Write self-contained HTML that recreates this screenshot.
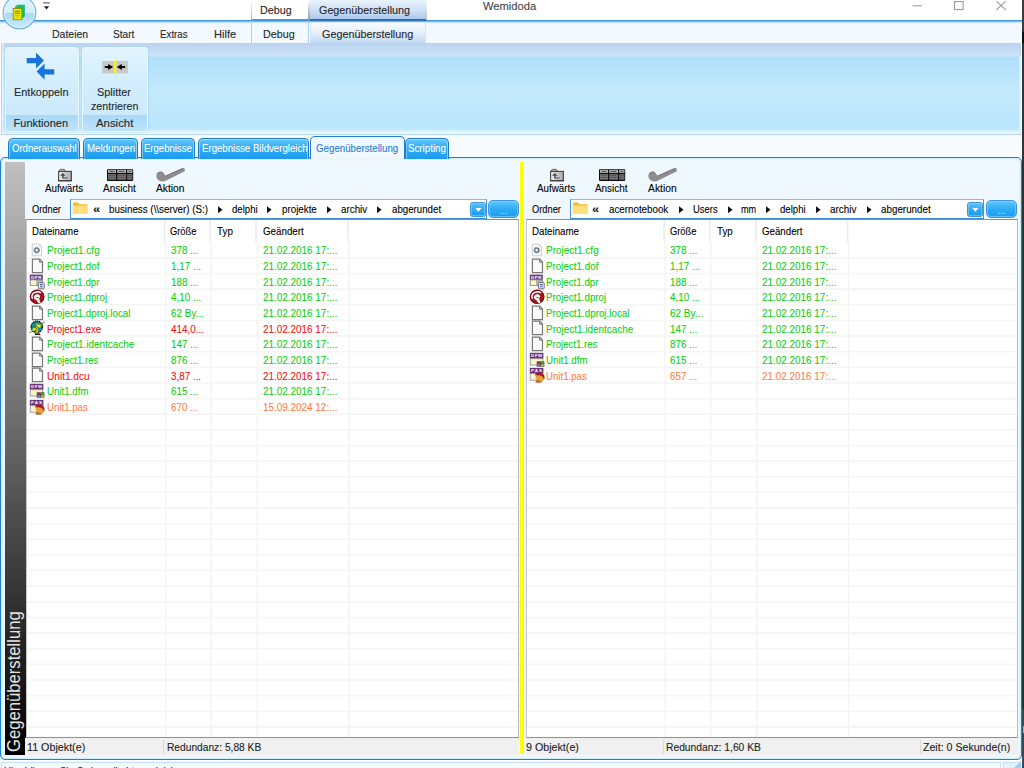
<!DOCTYPE html><html lang="de"><head><meta charset="utf-8"><title>Wemidoda</title><style>
*{margin:0;padding:0;box-sizing:border-box}
html,body{width:1024px;height:768px;overflow:hidden;background:#fff}
body{position:relative;font-family:"Liberation Sans",sans-serif;color:#333}
.a{position:absolute}
.t{position:absolute;white-space:nowrap;line-height:1;transform-origin:0 0;-webkit-text-stroke:.1px currentColor}
.g{color:#12cf12}.r{color:#f61212}.o{color:#ff8048}
.tab{position:absolute;top:138px;height:20.600px;border:1px solid #1f78c8;border-bottom:none;border-radius:5px 5px 0 0;background:linear-gradient(#62c6fb,#30adf5 45%,#1a9bf0);box-shadow:inset 0 1px 0 #a4dcfc,inset 1px 0 0 rgba(255,255,255,.35),inset -1px 0 0 rgba(255,255,255,.45)}
.hl{position:absolute;height:1px;background:#f0f0f0}
.vl{position:absolute;width:1px;background:#f0f0f0}
</style></head><body>
<div class="a" style="left:0;top:0;width:1022px;height:20px;background:#fff"></div>
<div class="a" style="left:0;top:20px;width:1022px;height:23px;background:linear-gradient(#3b8fdc 0,#4a9ce2 1px,#a9d6f5 2px,#e2f2fd 3px,#f3f9fe 4px,#f3f9fe 100%)"></div>
<div class="a" style="left:251px;top:0;width:1px;height:20px;background:linear-gradient(#fff,#aaa)"></div>
<div class="a" style="left:252px;top:0;width:56px;height:20px;background:#fff;border-bottom:1px solid #8a8a8a"></div>
<div class="a" style="left:308px;top:0;width:2px;height:20px;background:linear-gradient(#fff,#999)"></div>
<div class="a" style="left:310px;top:0;width:116px;height:21px;background:linear-gradient(#eaf3fc,#c3daf3 70%,#a9c8ec);border-bottom:2px solid #2f6fb5"></div>
<div class="a" style="left:426px;top:0;width:1px;height:20px;background:linear-gradient(#fff,#bbb)"></div>
<div class="t" style="left:260.20px;top:5px;font-size:11px;color:#262626;transform:scaleX(0.975);">Debug</div>
<div class="t" style="left:319.35px;top:5px;font-size:11px;color:#262626;transform:scaleX(0.979);">Gegenüberstellung</div>
<div class="t" style="left:482.60px;top:1px;font-size:11px;color:#444;transform:scaleX(1.015);">Wemidoda</div>
<div class="a" style="left:251px;top:21px;width:1px;height:22px;background:#a9d0f2"></div>
<div class="a" style="left:308px;top:21px;width:1px;height:22px;background:#a9d0f2"></div>
<div class="a" style="left:311px;top:23px;width:114px;height:21px;border-radius:4px 4px 0 0;background:linear-gradient(#fafcff,#e4eefa 50%,#bcd6f1);box-shadow:0 0 0 1px #d5e6f7"></div>
<div class="t" style="left:51.60px;top:29px;font-size:11px;color:#262626;transform:scaleX(0.955);">Dateien</div>
<div class="t" style="left:113.35px;top:29px;font-size:11px;color:#262626;transform:scaleX(0.923);">Start</div>
<div class="t" style="left:160.10px;top:29px;font-size:11px;color:#262626;transform:scaleX(0.888);">Extras</div>
<div class="t" style="left:213.60px;top:29px;font-size:11px;color:#262626;transform:scaleX(1.008);">Hilfe</div>
<div class="t" style="left:263.10px;top:29px;font-size:11px;color:#262626;transform:scaleX(0.978);">Debug</div>
<div class="t" style="left:322.10px;top:29px;font-size:11px;color:#262626;transform:scaleX(0.981);">Gegenüberstellung</div>
<svg class="a" style="left:900px;top:0" width="122" height="20" viewBox="0 0 122 20"><path d="M12.5 5.8h9.5" stroke="#a8a8a8" stroke-width="1.2"/><rect x="54.5" y="1.6" width="8.6" height="8" fill="none" stroke="#999" stroke-width="1.1"/><path d="M96.3 1.2l9.6 8.8M105.9 1.2l-9.6 8.8" stroke="#a0a0a0" stroke-width="1.1"/></svg>
<svg class="a" style="left:42px;top:1px" width="10" height="10" viewBox="0 0 10 10"><rect x="1.2" y="1.4" width="6.6" height="1" fill="#444"/><path d="M1.8 5.3h5.4L4.5 8.4z" fill="#222"/></svg>
<svg class="a" style="left:0;top:0" width="40" height="32" viewBox="0 0 40 32">
<defs><linearGradient id="ab" x1="0" y1="0" x2="0" y2="1"><stop offset="0" stop-color="#e4f4fd"/><stop offset=".515" stop-color="#d4edfc"/><stop offset=".525" stop-color="#a6daf7"/><stop offset="1" stop-color="#cdebfc"/></linearGradient></defs>
<ellipse cx="19.5" cy="12.4" rx="16.3" ry="16.3" fill="url(#ab)" stroke="#76b5e8" stroke-width="1.300"/>
<ellipse cx="19.5" cy="12.4" rx="15.2" ry="15.2" fill="none" stroke="#e9f6fe" stroke-width="1" opacity=".8"/>
<path d="M16.5 4.800h8.400v11.400l-1.600 1.400h-6.800z" fill="#18b5b0"/>
<path d="M15 6.300h8.400v11l-1.600 1.400H15z" fill="#16c040"/>
<rect x="13.200" y="8.500" width="8.600" height="11.300" fill="#f2f000" stroke="#8a8600" stroke-width=".8"/>
<path d="M14.800 11.200h5.400M14.800 13.200h5.400" stroke="#6a6600" stroke-width=".9"/>
<path d="M14.800 15.400h5.400M14.800 17.200h5.400" stroke="#b8b400" stroke-width=".8"/>
</svg>
<div class="a" style="left:1px;top:43px;width:1020px;height:92px;border:1px solid #b4d6f3;border-top:none;background:linear-gradient(#b9d4f0 0,#cbe1f6 12px,#d2e7f8 13px,#aedffa 14px,#c4e9fc 50px,#b9e4fb 84px,#c9ebfc 87px,#eef8fe 90px,#eef8fe 92px)"></div>
<div class="a" style="left:2px;top:43px;width:3px;height:91px;background:linear-gradient(90deg,#eaf5fd,rgba(234,245,253,0))"></div>
<div class="a" style="left:1018.600px;top:56px;width:2px;height:77px;background:rgba(226,243,253,.75)"></div>
<div class="a" style="left:4.5px;top:47px;width:74px;height:85px;border:1px solid #eaf6fe;border-radius:3px;background:linear-gradient(#e2f4fe,#d3eefd 40%,#cbeafc 67px,#a8d8f8 67px,#bfe4fa 83px);box-shadow:0 0 0 1px rgba(150,200,240,.3)"></div>
<div class="a" style="left:82px;top:47px;width:66px;height:85px;border:1px solid #eaf6fe;border-radius:3px;background:linear-gradient(#e2f4fe,#d3eefd 40%,#cbeafc 67px,#a8d8f8 67px,#bfe4fa 83px);box-shadow:0 0 0 1px rgba(150,200,240,.3)"></div>
<svg class="a" style="left:24px;top:50px" width="34" height="32" viewBox="24 50 34 32"><g fill="#1874dc"><path d="M26.700 58.100h9.400v-5.400l7.900 7.900-7.900 8.100v-5.500h-9.400z"/><path d="M54.200 69.200h-9.600v-5.800l-8 8.200 8 8.100v-5.300h9.600z"/></g><path d="M46.400 59.700L35.800 70.300" stroke="#d9f0fd" stroke-width="1.700"/></svg>
<svg class="a" style="left:101px;top:59px" width="28" height="16" viewBox="101 59 28 16"><rect x="102.100" y="61" width="25.800" height="12.400" fill="#c8c8c8"/><rect x="113.900" y="60.400" width="2.300" height="13.400" fill="#fbfb00"/><path d="M104.800 66.100h3.400V64l5 3.050-5 3.050V68h-3.400zM125.100 66.100h-3.300V64l-5 3.050 5 3.050V68h3.300z" fill="#000"/></svg>
<div class="t" style="left:13.60px;top:87px;font-size:11px;color:#262626;transform:scaleX(0.992);">Entkoppeln</div>
<div class="t" style="left:97.30px;top:87px;font-size:11px;color:#262626;transform:scaleX(0.993);">Splitter</div>
<div class="t" style="left:90.60px;top:101px;font-size:11px;color:#262626;transform:scaleX(0.971);">zentrieren</div>
<div class="t" style="left:13.60px;top:118px;font-size:11px;color:#262626;">Funktionen</div>
<div class="t" style="left:96.10px;top:118px;font-size:11px;color:#262626;transform:scaleX(1.034);">Ansicht</div>
<div class="a" style="left:0;top:135px;width:1022px;height:24px;background:#f6fbff"></div>
<div class="a" style="left:0;top:157px;width:1022px;height:603px;border:1.500px solid #1f7ed6;border-radius:5px;background:#eff8fe;box-shadow:inset 0 0 2px 1px #c6ebfd"></div>
<div class="tab" style="left:7.5px;width:72.5px"></div>
<div class="t" style="left:12.10px;top:143px;font-size:10.8px;color:#fff;transform:scaleX(0.884);">Ordnerauswahl</div>
<div class="tab" style="left:82.5px;width:55.0px"></div>
<div class="t" style="left:86.60px;top:143px;font-size:10.8px;color:#fff;transform:scaleX(0.902);">Meldungen</div>
<div class="tab" style="left:140.6px;width:54.4px"></div>
<div class="t" style="left:144.35px;top:143px;font-size:10.8px;color:#fff;transform:scaleX(0.883);">Ergebnisse</div>
<div class="tab" style="left:197.8px;width:111.7px"></div>
<div class="t" style="left:201.60px;top:143px;font-size:10.8px;color:#fff;transform:scaleX(0.893);">Ergebnisse Bildvergleich</div>
<div class="tab" style="left:405.4px;width:43.6px"></div>
<div class="t" style="left:407.60px;top:143px;font-size:10.8px;color:#fff;transform:scaleX(0.902);">Scripting</div>
<div class="a" style="left:309.7px;top:136px;width:95.3px;height:23px;border:1.300px solid #1f7ed6;border-bottom:none;border-radius:5px 5px 0 0;background:#eff8fe"></div>
<div class="t" style="left:316.40px;top:143px;font-size:10.8px;color:#2b7fd3;transform:scaleX(0.901);">Gegenüberstellung</div>
<div class="a" style="left:520px;top:162px;width:4.300px;height:592px;background:#ffff00"></div>
<svg class="a" style="left:50.0px;top:164px" width="140" height="22" viewBox="50 164 140 22"><defs><linearGradient id="fg25" x1="0" y1="0" x2="1" y2="0"><stop offset="0" stop-color="#f0f0f0"/><stop offset="1" stop-color="#a8a8a8"/></linearGradient></defs><path d="M59 171.200l1.300-1.800h4l1.300 1.800z" fill="#e4e4e4" stroke="#555" stroke-width=".9"/><rect x="58.600" y="171.400" width="12.800" height="9.300" fill="url(#fg25)" stroke="#444" stroke-width="1.100"/><path d="M58.400 180.800h13.200" stroke="#333" stroke-width="1"/><path d="M62.800 172.900l2.800 2.900h-2v1.600h4v1.200h-5.400v-2.800h-2.200z" fill="#4a4a4a"/><rect x="107" y="169.300" width="26.200" height="11.600" rx=".8" fill="#0c0c0c"/><rect x="108" y="170.200" width="8" height="2.600" fill="#cfcfcf"/><rect x="117.200" y="170.200" width="8.800" height="2.600" fill="#cfcfcf"/><rect x="127.200" y="170.200" width="5.200" height="2.600" fill="#cfcfcf"/><path d="M109.400 171.500h5.400M118.600 171.500h6M128.400 171.500h3" stroke="#333" stroke-width=".8"/><rect x="108" y="174.100" width="8" height="5.600" fill="#747474"/><rect x="117.200" y="174.100" width="8.800" height="5.600" fill="#747474"/><rect x="127.200" y="174.100" width="5.200" height="5.600" fill="#747474"/><path d="M109 175.600h6M118.200 175.600h7M128 175.600h3.600M109 177.600h6M118.200 177.600h7M128 177.600h3.600" stroke="#3c3c3c" stroke-width=".8" stroke-dasharray="1.400 .8"/><path d="M156.400 175.800c0-3 3.400-4.800 6.400-3.400 1.300.6 2 2 2.600 3.400l17-7.600c1.600-.6 2.600.4 2.400 1.800v1.200l-19.600 9.800c-4 1.400-8.800-.4-8.800-5.200z" fill="#8d8d8d"/><path d="M165.600 176.100l17-7.600M157 174.200c.8-2 3.400-3 5.600-1.800" stroke="#686868" stroke-width=".8" fill="none"/></svg>
<div class="t" style="left:44.60px;top:183px;font-size:10.8px;color:#000;transform:scaleX(0.909);">Aufwärts</div>
<div class="t" style="left:103.35px;top:183px;font-size:10.8px;color:#000;transform:scaleX(0.924);">Ansicht</div>
<div class="t" style="left:155.85px;top:183px;font-size:10.8px;color:#000;transform:scaleX(0.948);">Aktion</div>
<div class="t" style="left:32.30px;top:204px;font-size:10.8px;color:#000;transform:scaleX(0.860);">Ordner</div>
<div class="a" style="left:69.9px;top:199px;width:417.3px;height:20px;border:1.300px solid #4a92da;border-top-color:#86bdeb;border-bottom-color:#3b8ad2;background:#fff"></div>
<svg class="a" style="left:72.10000000000001px;top:202px" width="16" height="13" viewBox="0 0 16 13"><path d="M.8 1.600c0-.6.400-1 1-1h4.200l1.400 1.600h7c.6 0 1 .4 1 1V11c0 .6-.4 1-1 1H1.800c-.6 0-1-.4-1-1z" fill="#f5b82e"/><path d="M.8 3.600h14.600V11c0 .6-.4 1-1 1H1.800c-.6 0-1-.4-1-1z" fill="#ffdf7e"/></svg>
<div class="t" style="left:92.50px;top:204px;font-size:11px;color:#222;font-weight:700;transform:scaleX(1.176);">«</div>
<div class="t" style="left:108.70px;top:204px;font-size:10.8px;color:#000;transform:scaleX(0.907);">business (\\server) (S:)</div>
<svg class="a" style="left:218px;top:206px" width="5" height="8" viewBox="0 0 5 8"><path d="M0 .3l4.600 3.500L0 7.300z" fill="#111"/></svg>
<div class="t" style="left:232.10px;top:204px;font-size:10.8px;color:#000;transform:scaleX(0.891);">delphi</div>
<svg class="a" style="left:267.3px;top:206px" width="5" height="8" viewBox="0 0 5 8"><path d="M0 .3l4.600 3.500L0 7.300z" fill="#111"/></svg>
<div class="t" style="left:281.50px;top:204px;font-size:10.8px;color:#000;transform:scaleX(0.906);">projekte</div>
<svg class="a" style="left:326.5px;top:206px" width="5" height="8" viewBox="0 0 5 8"><path d="M0 .3l4.600 3.500L0 7.300z" fill="#111"/></svg>
<div class="t" style="left:340.60px;top:204px;font-size:10.8px;color:#000;transform:scaleX(0.909);">archiv</div>
<svg class="a" style="left:377px;top:206px" width="5" height="8" viewBox="0 0 5 8"><path d="M0 .3l4.600 3.500L0 7.300z" fill="#111"/></svg>
<div class="t" style="left:391.50px;top:204px;font-size:10.8px;color:#000;transform:scaleX(0.899);">abgerundet</div>
<div class="a" style="left:470.2px;top:201.500px;width:15.400px;height:15.500px;border:1px solid #3f93dc;border-radius:2.500px;background:linear-gradient(#5cc2fa,#2eacf5 50%,#1a9bf0);box-shadow:inset 0 0 0 1px rgba(150,210,250,.55)"></div>
<svg class="a" style="left:473.59999999999997px;top:207px" width="9" height="6" viewBox="0 0 9 6"><path d="M1.300 1h6.200L4.400 4.800z" fill="#fff"/></svg>
<div class="a" style="left:488.4px;top:200.200px;width:30.3px;height:17.800px;border:1px solid #3f93dc;border-radius:5px;background:linear-gradient(#62c8fb,#2eacf5 50%,#1a9bf0);box-shadow:inset 0 0 0 1px rgba(150,210,250,.6)"></div>
<div class="t" style="left:499.55px;top:206px;font-size:10px;color:#bfe4fb;">...</div>
<div class="a" style="left:26.0px;top:219px;width:493.3px;height:519px;background:#fff;border:1px solid #9a9a9a;border-color:#8e8e8e #b6bac2 #90909a #c4c4c4;border-right-width:1.500px"></div>
<svg class="a" style="left:27.0px;top:220px" width="490.8" height="517" viewBox="27.0 220 490.8 517"><path d="M27.0 257.90h490.8M27.0 273.53h490.8M27.0 289.17h490.8M27.0 304.80h490.8M27.0 320.43h490.8M27.0 336.06h490.8M27.0 351.70h490.8M27.0 367.33h490.8M27.0 382.96h490.8M27.0 398.60h490.8M27.0 414.23h490.8M27.0 429.86h490.8M27.0 445.50h490.8M27.0 461.13h490.8M27.0 476.76h490.8M27.0 492.39h490.8M27.0 508.03h490.8M27.0 523.66h490.8M27.0 539.29h490.8M27.0 554.93h490.8M27.0 570.56h490.8M27.0 586.19h490.8M27.0 601.83h490.8M27.0 617.46h490.8M27.0 633.09h490.8M27.0 648.73h490.8M27.0 664.36h490.8M27.0 679.99h490.8M27.0 695.62h490.8M27.0 711.26h490.8M27.0 726.89h490.8M165.7 242.300V737M211.2 242.300V737M257.5 242.300V737M349 242.300V737" stroke="#f5f5f5" stroke-width="1.600" fill="none"/><path d="M164.5 220V242.300M210 220V242.300M256 220V242.300M348.1 220V242.300" stroke="#e9e9e9" stroke-width="1.400" fill="none"/></svg>
<div class="t" style="left:32.35px;top:226px;font-size:10.8px;color:#000;transform:scaleX(0.890);">Dateiname</div>
<div class="t" style="left:170.35px;top:226px;font-size:10.8px;color:#000;transform:scaleX(0.864);">Größe</div>
<div class="t" style="left:216.85px;top:226px;font-size:10.8px;color:#000;transform:scaleX(0.911);">Typ</div>
<div class="t" style="left:262.50px;top:226px;font-size:10.8px;color:#000;transform:scaleX(0.904);">Geändert</div>
<svg class="a" style="left:25.4px;top:242.27px" width="21" height="16" viewBox="0 0 21 16"><path d="M7.200 2h7l2.400 2.400v9.400H7.200z" fill="#f7f9fb" stroke="#c6c9cc" stroke-width=".9"/><path d="M14.200 2v2.400h2.400" fill="none" stroke="#d0d3d6" stroke-width=".7"/><circle cx="11.700" cy="8.200" r="2" fill="none" stroke="#5f7482" stroke-width="1.300"/><circle cx="11.700" cy="8.200" r="2.800" fill="none" stroke="#5f7482" stroke-width="1" stroke-dasharray="1.100 1.100"/></svg>
<div class="t g" style="left:46.85px;top:245px;font-size:10.8px;transform:scaleX(0.924);">Project1.cfg</div>
<div class="t g" style="left:170.60px;top:245px;font-size:10.8px;transform:scaleX(0.910);">378 ...</div>
<div class="t g" style="left:262.50px;top:245px;font-size:10.8px;transform:scaleX(0.918);">21.02.2016 17:...</div>
<svg class="a" style="left:25.4px;top:257.9px" width="21" height="16" viewBox="0 0 21 16"><path d="M7.400 1.200h7.400l2.700 2.800v10.600H7.400z" fill="#fafafa" stroke="#787878" stroke-width="1.200"/><path d="M14.600 1.400v2.800h2.800" fill="none" stroke="#787878" stroke-width="1"/></svg>
<div class="t g" style="left:46.85px;top:261px;font-size:10.8px;transform:scaleX(0.910);">Project1.dof</div>
<div class="t g" style="left:170.60px;top:261px;font-size:10.8px;transform:scaleX(0.912);">1,17 ...</div>
<div class="t g" style="left:262.50px;top:261px;font-size:10.8px;transform:scaleX(0.918);">21.02.2016 17:...</div>
<svg class="a" style="left:25.4px;top:273.54px" width="21" height="16" viewBox="0 0 21 16"><rect x="4.800" y=".6" width="13" height="5.300" fill="#6b3679"/><rect x="5.200" y="5.900" width="12.200" height="5.600" fill="#b4b4b4" stroke="#8a8a8a" stroke-width=".8"/><rect x="6" y="6.400" width="5" height="4.600" fill="#f8f6c4"/><text x="6" y="4.700" font-family="Liberation Sans,sans-serif" font-size="4.400" font-weight="bold" fill="#fff" textLength="10.400" lengthAdjust="spacing">DPR</text><rect x="13.400" y="8.600" width="5.800" height="6.200" rx=".8" fill="#f4f2c8" stroke="#6c6c6c" stroke-width="1"/><path d="M15 10.600h2.600M15 12.800h2.600" stroke="#3a55c8" stroke-width="1.100"/></svg>
<div class="t g" style="left:46.85px;top:277px;font-size:10.8px;transform:scaleX(0.901);">Project1.dpr</div>
<div class="t g" style="left:170.60px;top:277px;font-size:10.8px;transform:scaleX(0.910);">188 ...</div>
<div class="t g" style="left:262.50px;top:277px;font-size:10.8px;transform:scaleX(0.918);">21.02.2016 17:...</div>
<svg class="a" style="left:25.4px;top:289.17px" width="21" height="16" viewBox="0 0 21 16"><ellipse cx="12.100" cy="7.800" rx="7.400" ry="7.300" fill="#a31420"/><ellipse cx="12.100" cy="7.800" rx="6.700" ry="6.600" fill="none" stroke="#800c16" stroke-width="1"/><path d="M7.500 9.800C6.300 7 7.500 4.400 10 3.300c2-.9 4.400-.6 6 .5" stroke="#fff" stroke-width="1.400" fill="none"/><path d="M9.200 6.900c1-1.200 2.400-1.700 3.600-1.600 1.200.1 2 .9 2.300 2-.1 1-.5 1.800-1 2.500l1.400 4-1.800.6-2.400-3.400c-.9-.2-1.600-.7-2-1.300-.5-.9-.5-1.900-.1-2.800z" fill="#fff"/><path d="M11.400 8.300l2.400.4" stroke="#a31420" stroke-width=".9"/></svg>
<div class="t g" style="left:46.85px;top:292px;font-size:10.8px;transform:scaleX(0.903);">Project1.dproj</div>
<div class="t g" style="left:170.60px;top:292px;font-size:10.8px;transform:scaleX(0.912);">4,10 ...</div>
<div class="t g" style="left:262.50px;top:292px;font-size:10.8px;transform:scaleX(0.918);">21.02.2016 17:...</div>
<svg class="a" style="left:25.4px;top:304.8px" width="21" height="16" viewBox="0 0 21 16"><path d="M7.400 1.200h7.400l2.700 2.800v10.600H7.400z" fill="#fafafa" stroke="#787878" stroke-width="1.200"/><path d="M14.600 1.400v2.800h2.800" fill="none" stroke="#787878" stroke-width="1"/></svg>
<div class="t g" style="left:46.85px;top:308px;font-size:10.8px;transform:scaleX(0.909);">Project1.dproj.local</div>
<div class="t g" style="left:170.60px;top:308px;font-size:10.8px;transform:scaleX(0.919);">62 By...</div>
<div class="t g" style="left:262.50px;top:308px;font-size:10.8px;transform:scaleX(0.918);">21.02.2016 17:...</div>
<svg class="a" style="left:25.4px;top:320.44px" width="21" height="16" viewBox="0 0 21 16"><circle cx="11.800" cy="6.900" r="5.700" fill="#0f8a8e" stroke="#071a1c" stroke-width="1.300" stroke-dasharray="1.500 .5"/><path d="M7 5c3-1.200 6.600-1.200 9.600 0M6.600 9c3 1.300 7.400 1.300 10.400 0" stroke="#2ab3b0" stroke-width=".7" fill="none"/><rect x="10.800" y="3.200" width="1.900" height="10.400" fill="#aaa212"/><rect x="12.300" y="3.600" width=".6" height="9.600" fill="#d8dcc0"/><rect x="9.900" y="3.100" width="1.200" height="1.100" fill="#b82010"/><rect x="9.800" y="13.500" width="5.400" height="1.500" rx=".5" fill="#0a0a0a"/><rect x="12.600" y="13.600" width="1.400" height="1.300" fill="#c81414"/><path d="M4.600 12.900L19.600 1.700" stroke="#2a2a10" stroke-width="1.100" stroke-opacity=".7"/><path d="M4.600 12.800L19.200 1.900" stroke="#f4f000" stroke-width=".7"/><circle cx="9.100" cy="9.300" r="1.400" fill="#f4f400"/><circle cx="14.300" cy="5.900" r="1.500" fill="#f4f400"/></svg>
<div class="t r" style="left:46.85px;top:324px;font-size:10.8px;transform:scaleX(0.904);">Project1.exe</div>
<div class="t r" style="left:170.60px;top:324px;font-size:10.8px;transform:scaleX(0.913);">414,0...</div>
<div class="t r" style="left:262.50px;top:324px;font-size:10.8px;transform:scaleX(0.918);">21.02.2016 17:...</div>
<svg class="a" style="left:25.4px;top:336.07px" width="21" height="16" viewBox="0 0 21 16"><path d="M7.400 1.200h7.400l2.700 2.800v10.600H7.400z" fill="#fafafa" stroke="#787878" stroke-width="1.200"/><path d="M14.600 1.400v2.800h2.800" fill="none" stroke="#787878" stroke-width="1"/></svg>
<div class="t g" style="left:46.85px;top:339px;font-size:10.8px;transform:scaleX(0.920);">Project1.identcache</div>
<div class="t g" style="left:170.60px;top:339px;font-size:10.8px;transform:scaleX(0.910);">147 ...</div>
<div class="t g" style="left:262.50px;top:339px;font-size:10.8px;transform:scaleX(0.918);">21.02.2016 17:...</div>
<svg class="a" style="left:25.4px;top:351.7px" width="21" height="16" viewBox="0 0 21 16"><path d="M7.400 1.200h7.400l2.700 2.800v10.600H7.400z" fill="#fafafa" stroke="#787878" stroke-width="1.200"/><path d="M14.600 1.400v2.800h2.800" fill="none" stroke="#787878" stroke-width="1"/></svg>
<div class="t g" style="left:46.85px;top:355px;font-size:10.8px;transform:scaleX(0.893);">Project1.res</div>
<div class="t g" style="left:170.60px;top:355px;font-size:10.8px;transform:scaleX(0.910);">876 ...</div>
<div class="t g" style="left:262.50px;top:355px;font-size:10.8px;transform:scaleX(0.918);">21.02.2016 17:...</div>
<svg class="a" style="left:25.4px;top:367.33px" width="21" height="16" viewBox="0 0 21 16"><path d="M7.400 1.200h7.400l2.700 2.800v10.600H7.400z" fill="#fafafa" stroke="#787878" stroke-width="1.200"/><path d="M14.600 1.400v2.800h2.800" fill="none" stroke="#787878" stroke-width="1"/></svg>
<div class="t r" style="left:46.85px;top:371px;font-size:10.8px;transform:scaleX(0.935);">Unit1.dcu</div>
<div class="t r" style="left:170.60px;top:371px;font-size:10.8px;transform:scaleX(0.912);">3,87 ...</div>
<div class="t r" style="left:262.50px;top:371px;font-size:10.8px;transform:scaleX(0.918);">21.02.2016 17:...</div>
<svg class="a" style="left:25.4px;top:382.97px" width="21" height="16" viewBox="0 0 21 16"><rect x="4.800" y=".8" width="13.600" height="5.900" fill="#6b3679"/><rect x="5.200" y="6.700" width="12.600" height="6.300" fill="#f8f6c4" stroke="#8a8a8a" stroke-width=".8"/><text x="6" y="5.400" font-family="Liberation Sans,sans-serif" font-size="4.400" font-weight="bold" fill="#fff" textLength="11" lengthAdjust="spacing">DFM</text><rect x="11.700" y="9.200" width="7.700" height="5.600" rx=".6" fill="#555"/><rect x="12.500" y="9.800" width="2.600" height="1.900" rx=".8" fill="#e01828"/><rect x="16.100" y="9.800" width="2.600" height="1.900" rx=".8" fill="#2cb62c"/><rect x="12.500" y="12.300" width="2.600" height="1.900" rx=".8" fill="#5f8df0"/><rect x="16.100" y="12.300" width="2.600" height="1.900" rx=".8" fill="#f2c428"/></svg>
<div class="t g" style="left:46.85px;top:386px;font-size:10.8px;transform:scaleX(0.899);">Unit1.dfm</div>
<div class="t g" style="left:170.60px;top:386px;font-size:10.8px;transform:scaleX(0.910);">615 ...</div>
<div class="t g" style="left:262.50px;top:386px;font-size:10.8px;transform:scaleX(0.918);">21.02.2016 17:...</div>
<svg class="a" style="left:25.4px;top:398.6px" width="21" height="16" viewBox="0 0 21 16"><rect x="4.800" y=".9" width="13.600" height="5.700" fill="#6b3679"/><rect x="5.200" y="6.600" width="9" height="6.600" fill="#f8f6c4" stroke="#8a8a8a" stroke-width=".8"/><text x="6" y="5.400" font-family="Liberation Sans,sans-serif" font-size="4.400" font-weight="bold" fill="#fff" textLength="11" lengthAdjust="spacing">PAS</text><ellipse cx="14.900" cy="10.900" rx="4.300" ry="3.900" fill="#e2a23c"/><path d="M9.800 8.600c.8-3.400 6.600-4.200 9 -.8.900 1.300.9 3.400.4 5-.5-2.400-1.900-4-4.400-4.400-1.900-.3-3.600-.2-5 .2z" fill="#b01818"/><path d="M11.400 10.600c.6 1.600.2 3-.9 4.200 1.800.5 4.400.5 6.400-.3-1.800-.2-3-.9-3.600-2.100-.3-.8-.9-1.500-1.900-1.800z" fill="#c8781c"/><path d="M11 12.200l1.600-.5" stroke="#fff4d0" stroke-width=".9"/><path d="M10.600 15.200h6" stroke="#7a3c10" stroke-width=".7"/></svg>
<div class="t o" style="left:46.85px;top:402px;font-size:10.8px;transform:scaleX(0.895);">Unit1.pas</div>
<div class="t o" style="left:170.60px;top:402px;font-size:10.8px;transform:scaleX(0.910);">670 ...</div>
<div class="t o" style="left:262.50px;top:402px;font-size:10.8px;transform:scaleX(0.918);">15.09.2024 12:...</div>
<div class="a" style="left:26.0px;top:738px;width:493.3px;height:17px;background:#f0f0f0"></div>
<div class="t" style="left:26.60px;top:742px;font-size:11px;color:#222;transform:scaleX(0.975);">11 Objekt(e)</div>
<div class="a" style="left:162.5px;top:739.500px;width:1px;height:14px;background:#d9d9d9"></div>
<div class="t" style="left:166.60px;top:742px;font-size:11px;color:#222;transform:scaleX(0.928);">Redundanz: 5,88 KB</div>
<svg class="a" style="left:542.1px;top:164px" width="140" height="22" viewBox="50 164 140 22"><defs><linearGradient id="fg517" x1="0" y1="0" x2="1" y2="0"><stop offset="0" stop-color="#f0f0f0"/><stop offset="1" stop-color="#a8a8a8"/></linearGradient></defs><path d="M59 171.200l1.300-1.800h4l1.300 1.800z" fill="#e4e4e4" stroke="#555" stroke-width=".9"/><rect x="58.600" y="171.400" width="12.800" height="9.300" fill="url(#fg517)" stroke="#444" stroke-width="1.100"/><path d="M58.400 180.800h13.200" stroke="#333" stroke-width="1"/><path d="M62.800 172.900l2.800 2.900h-2v1.600h4v1.200h-5.400v-2.800h-2.200z" fill="#4a4a4a"/><rect x="107" y="169.300" width="26.200" height="11.600" rx=".8" fill="#0c0c0c"/><rect x="108" y="170.200" width="8" height="2.600" fill="#cfcfcf"/><rect x="117.200" y="170.200" width="8.800" height="2.600" fill="#cfcfcf"/><rect x="127.200" y="170.200" width="5.200" height="2.600" fill="#cfcfcf"/><path d="M109.400 171.500h5.400M118.600 171.500h6M128.400 171.500h3" stroke="#333" stroke-width=".8"/><rect x="108" y="174.100" width="8" height="5.600" fill="#747474"/><rect x="117.200" y="174.100" width="8.800" height="5.600" fill="#747474"/><rect x="127.200" y="174.100" width="5.200" height="5.600" fill="#747474"/><path d="M109 175.600h6M118.200 175.600h7M128 175.600h3.600M109 177.600h6M118.200 177.600h7M128 177.600h3.600" stroke="#3c3c3c" stroke-width=".8" stroke-dasharray="1.400 .8"/><path d="M156.400 175.800c0-3 3.400-4.800 6.400-3.400 1.300.6 2 2 2.600 3.400l17-7.600c1.600-.6 2.600.4 2.400 1.800v1.200l-19.600 9.800c-4 1.400-8.800-.4-8.800-5.200z" fill="#8d8d8d"/><path d="M165.600 176.100l17-7.600M157 174.200c.8-2 3.400-3 5.600-1.800" stroke="#686868" stroke-width=".8" fill="none"/></svg>
<div class="t" style="left:536.60px;top:183px;font-size:10.8px;color:#000;transform:scaleX(0.909);">Aufwärts</div>
<div class="t" style="left:595.35px;top:183px;font-size:10.8px;color:#000;transform:scaleX(0.917);">Ansicht</div>
<div class="t" style="left:647.60px;top:183px;font-size:10.8px;color:#000;transform:scaleX(0.956);">Aktion</div>
<div class="t" style="left:531.90px;top:204px;font-size:10.8px;color:#000;transform:scaleX(0.860);">Ordner</div>
<div class="a" style="left:569.5px;top:199px;width:414.8px;height:20px;border:1.300px solid #4a92da;border-top-color:#86bdeb;border-bottom-color:#3b8ad2;background:#fff"></div>
<svg class="a" style="left:571.7px;top:202px" width="16" height="13" viewBox="0 0 16 13"><path d="M.8 1.600c0-.6.400-1 1-1h4.200l1.400 1.600h7c.6 0 1 .4 1 1V11c0 .6-.4 1-1 1H1.800c-.6 0-1-.4-1-1z" fill="#f5b82e"/><path d="M.8 3.600h14.600V11c0 .6-.4 1-1 1H1.800c-.6 0-1-.4-1-1z" fill="#ffdf7e"/></svg>
<div class="t" style="left:592.10px;top:204px;font-size:11px;color:#222;font-weight:700;transform:scaleX(1.176);">«</div>
<div class="t" style="left:608.60px;top:204px;font-size:10.8px;color:#000;transform:scaleX(0.905);">acernotebook</div>
<svg class="a" style="left:679px;top:206px" width="5" height="8" viewBox="0 0 5 8"><path d="M0 .3l4.600 3.500L0 7.300z" fill="#111"/></svg>
<div class="t" style="left:692.60px;top:204px;font-size:10.8px;color:#000;transform:scaleX(0.876);">Users</div>
<svg class="a" style="left:727.5px;top:206px" width="5" height="8" viewBox="0 0 5 8"><path d="M0 .3l4.600 3.500L0 7.300z" fill="#111"/></svg>
<div class="t" style="left:741.10px;top:204px;font-size:10.8px;color:#000;transform:scaleX(0.844);">mm</div>
<svg class="a" style="left:766px;top:206px" width="5" height="8" viewBox="0 0 5 8"><path d="M0 .3l4.600 3.500L0 7.300z" fill="#111"/></svg>
<div class="t" style="left:780.10px;top:204px;font-size:10.8px;color:#000;transform:scaleX(0.891);">delphi</div>
<svg class="a" style="left:815.6px;top:206px" width="5" height="8" viewBox="0 0 5 8"><path d="M0 .3l4.600 3.500L0 7.300z" fill="#111"/></svg>
<div class="t" style="left:830.10px;top:204px;font-size:10.8px;color:#000;transform:scaleX(0.918);">archiv</div>
<svg class="a" style="left:866.8px;top:206px" width="5" height="8" viewBox="0 0 5 8"><path d="M0 .3l4.600 3.500L0 7.300z" fill="#111"/></svg>
<div class="t" style="left:880.60px;top:204px;font-size:10.8px;color:#000;transform:scaleX(0.910);">abgerundet</div>
<div class="a" style="left:967.3px;top:201.500px;width:15.400px;height:15.500px;border:1px solid #3f93dc;border-radius:2.500px;background:linear-gradient(#5cc2fa,#2eacf5 50%,#1a9bf0);box-shadow:inset 0 0 0 1px rgba(150,210,250,.55)"></div>
<svg class="a" style="left:970.6999999999999px;top:207px" width="9" height="6" viewBox="0 0 9 6"><path d="M1.300 1h6.200L4.400 4.800z" fill="#fff"/></svg>
<div class="a" style="left:985.5px;top:200.200px;width:31.9px;height:17.800px;border:1px solid #3f93dc;border-radius:5px;background:linear-gradient(#62c8fb,#2eacf5 50%,#1a9bf0);box-shadow:inset 0 0 0 1px rgba(150,210,250,.6)"></div>
<div class="t" style="left:997.45px;top:206px;font-size:10px;color:#bfe4fb;">...</div>
<div class="a" style="left:525.6px;top:219px;width:492.4px;height:519px;background:#fff;border:1px solid #9a9a9a;border-color:#8e8e8e #b6bac2 #90909a #c4c4c4;border-right-width:1.500px"></div>
<svg class="a" style="left:526.6px;top:220px" width="489.9" height="517" viewBox="526.6 220 489.9 517"><path d="M526.6 257.90h489.9M526.6 273.53h489.9M526.6 289.17h489.9M526.6 304.80h489.9M526.6 320.43h489.9M526.6 336.06h489.9M526.6 351.70h489.9M526.6 367.33h489.9M526.6 382.96h489.9M526.6 398.60h489.9M526.6 414.23h489.9M526.6 429.86h489.9M526.6 445.50h489.9M526.6 461.13h489.9M526.6 476.76h489.9M526.6 492.39h489.9M526.6 508.03h489.9M526.6 523.66h489.9M526.6 539.29h489.9M526.6 554.93h489.9M526.6 570.56h489.9M526.6 586.19h489.9M526.6 601.83h489.9M526.6 617.46h489.9M526.6 633.09h489.9M526.6 648.73h489.9M526.6 664.36h489.9M526.6 679.99h489.9M526.6 695.62h489.9M526.6 711.26h489.9M526.6 726.89h489.9M664.6 242.300V737M710.5 242.300V737M756.4 242.300V737M848.4 242.300V737" stroke="#f5f5f5" stroke-width="1.600" fill="none"/><path d="M663.75 220V242.300M709.5 220V242.300M755.4 220V242.300M847.4 220V242.300" stroke="#e9e9e9" stroke-width="1.400" fill="none"/></svg>
<div class="t" style="left:531.90px;top:226px;font-size:10.8px;color:#000;transform:scaleX(0.898);">Dateiname</div>
<div class="t" style="left:670.00px;top:226px;font-size:10.8px;color:#000;transform:scaleX(0.862);">Größe</div>
<div class="t" style="left:716.60px;top:226px;font-size:10.8px;color:#000;transform:scaleX(0.902);">Typ</div>
<div class="t" style="left:761.85px;top:226px;font-size:10.8px;color:#000;transform:scaleX(0.900);">Geändert</div>
<svg class="a" style="left:525px;top:242.27px" width="21" height="16" viewBox="0 0 21 16"><path d="M7.200 2h7l2.400 2.400v9.400H7.200z" fill="#f7f9fb" stroke="#c6c9cc" stroke-width=".9"/><path d="M14.200 2v2.400h2.400" fill="none" stroke="#d0d3d6" stroke-width=".7"/><circle cx="11.700" cy="8.200" r="2" fill="none" stroke="#5f7482" stroke-width="1.300"/><circle cx="11.700" cy="8.200" r="2.800" fill="none" stroke="#5f7482" stroke-width="1" stroke-dasharray="1.100 1.100"/></svg>
<div class="t g" style="left:546.45px;top:245px;font-size:10.8px;transform:scaleX(0.924);">Project1.cfg</div>
<div class="t g" style="left:670.10px;top:245px;font-size:10.8px;transform:scaleX(0.910);">378 ...</div>
<div class="t g" style="left:761.90px;top:245px;font-size:10.8px;transform:scaleX(0.918);">21.02.2016 17:...</div>
<svg class="a" style="left:525px;top:257.9px" width="21" height="16" viewBox="0 0 21 16"><path d="M7.400 1.200h7.400l2.700 2.800v10.600H7.400z" fill="#fafafa" stroke="#787878" stroke-width="1.200"/><path d="M14.600 1.400v2.800h2.800" fill="none" stroke="#787878" stroke-width="1"/></svg>
<div class="t g" style="left:546.45px;top:261px;font-size:10.8px;transform:scaleX(0.910);">Project1.dof</div>
<div class="t g" style="left:670.10px;top:261px;font-size:10.8px;transform:scaleX(0.912);">1,17 ...</div>
<div class="t g" style="left:761.90px;top:261px;font-size:10.8px;transform:scaleX(0.918);">21.02.2016 17:...</div>
<svg class="a" style="left:525px;top:273.54px" width="21" height="16" viewBox="0 0 21 16"><rect x="4.800" y=".6" width="13" height="5.300" fill="#6b3679"/><rect x="5.200" y="5.900" width="12.200" height="5.600" fill="#b4b4b4" stroke="#8a8a8a" stroke-width=".8"/><rect x="6" y="6.400" width="5" height="4.600" fill="#f8f6c4"/><text x="6" y="4.700" font-family="Liberation Sans,sans-serif" font-size="4.400" font-weight="bold" fill="#fff" textLength="10.400" lengthAdjust="spacing">DPR</text><rect x="13.400" y="8.600" width="5.800" height="6.200" rx=".8" fill="#f4f2c8" stroke="#6c6c6c" stroke-width="1"/><path d="M15 10.600h2.600M15 12.800h2.600" stroke="#3a55c8" stroke-width="1.100"/></svg>
<div class="t g" style="left:546.45px;top:277px;font-size:10.8px;transform:scaleX(0.901);">Project1.dpr</div>
<div class="t g" style="left:670.10px;top:277px;font-size:10.8px;transform:scaleX(0.910);">188 ...</div>
<div class="t g" style="left:761.90px;top:277px;font-size:10.8px;transform:scaleX(0.918);">21.02.2016 17:...</div>
<svg class="a" style="left:525px;top:289.17px" width="21" height="16" viewBox="0 0 21 16"><ellipse cx="12.100" cy="7.800" rx="7.400" ry="7.300" fill="#a31420"/><ellipse cx="12.100" cy="7.800" rx="6.700" ry="6.600" fill="none" stroke="#800c16" stroke-width="1"/><path d="M7.500 9.800C6.300 7 7.500 4.400 10 3.300c2-.9 4.400-.6 6 .5" stroke="#fff" stroke-width="1.400" fill="none"/><path d="M9.200 6.900c1-1.200 2.400-1.700 3.600-1.600 1.200.1 2 .9 2.300 2-.1 1-.5 1.800-1 2.500l1.400 4-1.800.6-2.400-3.400c-.9-.2-1.600-.7-2-1.300-.5-.9-.5-1.900-.1-2.800z" fill="#fff"/><path d="M11.400 8.300l2.400.4" stroke="#a31420" stroke-width=".9"/></svg>
<div class="t g" style="left:546.45px;top:292px;font-size:10.8px;transform:scaleX(0.903);">Project1.dproj</div>
<div class="t g" style="left:670.10px;top:292px;font-size:10.8px;transform:scaleX(0.912);">4,10 ...</div>
<div class="t g" style="left:761.90px;top:292px;font-size:10.8px;transform:scaleX(0.918);">21.02.2016 17:...</div>
<svg class="a" style="left:525px;top:304.8px" width="21" height="16" viewBox="0 0 21 16"><path d="M7.400 1.200h7.400l2.700 2.800v10.600H7.400z" fill="#fafafa" stroke="#787878" stroke-width="1.200"/><path d="M14.600 1.400v2.800h2.800" fill="none" stroke="#787878" stroke-width="1"/></svg>
<div class="t g" style="left:546.45px;top:308px;font-size:10.8px;transform:scaleX(0.909);">Project1.dproj.local</div>
<div class="t g" style="left:670.10px;top:308px;font-size:10.8px;transform:scaleX(0.919);">62 By...</div>
<div class="t g" style="left:761.90px;top:308px;font-size:10.8px;transform:scaleX(0.918);">21.02.2016 17:...</div>
<svg class="a" style="left:525px;top:320.44px" width="21" height="16" viewBox="0 0 21 16"><path d="M7.400 1.200h7.400l2.700 2.800v10.600H7.400z" fill="#fafafa" stroke="#787878" stroke-width="1.200"/><path d="M14.600 1.400v2.800h2.800" fill="none" stroke="#787878" stroke-width="1"/></svg>
<div class="t g" style="left:546.45px;top:324px;font-size:10.8px;transform:scaleX(0.920);">Project1.identcache</div>
<div class="t g" style="left:670.10px;top:324px;font-size:10.8px;transform:scaleX(0.910);">147 ...</div>
<div class="t g" style="left:761.90px;top:324px;font-size:10.8px;transform:scaleX(0.918);">21.02.2016 17:...</div>
<svg class="a" style="left:525px;top:336.07px" width="21" height="16" viewBox="0 0 21 16"><path d="M7.400 1.200h7.400l2.700 2.800v10.600H7.400z" fill="#fafafa" stroke="#787878" stroke-width="1.200"/><path d="M14.600 1.400v2.800h2.800" fill="none" stroke="#787878" stroke-width="1"/></svg>
<div class="t g" style="left:546.45px;top:339px;font-size:10.8px;transform:scaleX(0.893);">Project1.res</div>
<div class="t g" style="left:670.10px;top:339px;font-size:10.8px;transform:scaleX(0.910);">876 ...</div>
<div class="t g" style="left:761.90px;top:339px;font-size:10.8px;transform:scaleX(0.918);">21.02.2016 17:...</div>
<svg class="a" style="left:525px;top:351.7px" width="21" height="16" viewBox="0 0 21 16"><rect x="4.800" y=".8" width="13.600" height="5.900" fill="#6b3679"/><rect x="5.200" y="6.700" width="12.600" height="6.300" fill="#f8f6c4" stroke="#8a8a8a" stroke-width=".8"/><text x="6" y="5.400" font-family="Liberation Sans,sans-serif" font-size="4.400" font-weight="bold" fill="#fff" textLength="11" lengthAdjust="spacing">DFM</text><rect x="11.700" y="9.200" width="7.700" height="5.600" rx=".6" fill="#555"/><rect x="12.500" y="9.800" width="2.600" height="1.900" rx=".8" fill="#e01828"/><rect x="16.100" y="9.800" width="2.600" height="1.900" rx=".8" fill="#2cb62c"/><rect x="12.500" y="12.300" width="2.600" height="1.900" rx=".8" fill="#5f8df0"/><rect x="16.100" y="12.300" width="2.600" height="1.900" rx=".8" fill="#f2c428"/></svg>
<div class="t g" style="left:546.45px;top:355px;font-size:10.8px;transform:scaleX(0.899);">Unit1.dfm</div>
<div class="t g" style="left:670.10px;top:355px;font-size:10.8px;transform:scaleX(0.910);">615 ...</div>
<div class="t g" style="left:761.90px;top:355px;font-size:10.8px;transform:scaleX(0.918);">21.02.2016 17:...</div>
<svg class="a" style="left:525px;top:367.33px" width="21" height="16" viewBox="0 0 21 16"><rect x="4.800" y=".9" width="13.600" height="5.700" fill="#6b3679"/><rect x="5.200" y="6.600" width="9" height="6.600" fill="#f8f6c4" stroke="#8a8a8a" stroke-width=".8"/><text x="6" y="5.400" font-family="Liberation Sans,sans-serif" font-size="4.400" font-weight="bold" fill="#fff" textLength="11" lengthAdjust="spacing">PAS</text><ellipse cx="14.900" cy="10.900" rx="4.300" ry="3.900" fill="#e2a23c"/><path d="M9.800 8.600c.8-3.400 6.600-4.200 9 -.8.900 1.300.9 3.400.4 5-.5-2.400-1.900-4-4.400-4.400-1.900-.3-3.600-.2-5 .2z" fill="#b01818"/><path d="M11.400 10.600c.6 1.600.2 3-.9 4.200 1.800.5 4.400.5 6.400-.3-1.800-.2-3-.9-3.600-2.100-.3-.8-.9-1.500-1.900-1.800z" fill="#c8781c"/><path d="M11 12.200l1.600-.5" stroke="#fff4d0" stroke-width=".9"/><path d="M10.600 15.200h6" stroke="#7a3c10" stroke-width=".7"/></svg>
<div class="t o" style="left:546.45px;top:371px;font-size:10.8px;transform:scaleX(0.895);">Unit1.pas</div>
<div class="t o" style="left:670.10px;top:371px;font-size:10.8px;transform:scaleX(0.910);">657 ...</div>
<div class="t o" style="left:761.90px;top:371px;font-size:10.8px;transform:scaleX(0.918);">21.02.2016 17:...</div>
<div class="a" style="left:525.6px;top:738px;width:492.4px;height:17px;background:#f0f0f0"></div>
<div class="t" style="left:526.20px;top:742px;font-size:11px;color:#222;transform:scaleX(0.972);">9 Objekt(e)</div>
<div class="a" style="left:662.7px;top:739.500px;width:1px;height:14px;background:#d9d9d9"></div>
<div class="t" style="left:665.90px;top:742px;font-size:11px;color:#222;transform:scaleX(0.935);">Redundanz: 1,60 KB</div>
<div class="a" style="left:919.6px;top:739.500px;width:1px;height:14px;background:#d9d9d9"></div>
<div class="t" style="left:923.30px;top:742px;font-size:11px;color:#222;transform:scaleX(0.964);">Zeit: 0 Sekunde(n)</div>
<div class="a" style="left:5px;top:162px;width:19.800px;height:592.500px;background:linear-gradient(#c0c0c0,#000)"></div><div class="a" style="left:24.800px;top:219px;width:1px;height:519px;background:linear-gradient(#adadad,#050505)"></div>
<div class="t" style="left:6.200px;top:751.500px;font-size:17.500px;color:#e4e4e4;-webkit-text-stroke:0;transform:rotate(-90deg) scaleX(.952);transform-origin:0 0">Gegenüberstellung</div>
<div class="a" style="left:0;top:760.500px;width:1022px;height:8px;background:#f3f9fe"></div>
<div class="a" style="left:1px;top:761.500px;width:1000px;height:7px;border:1px solid #c6e0f6;border-bottom:none;background:#f6fbff"></div>
<div class="a" style="left:1003px;top:761.500px;width:18px;height:7px;border:1px solid #c6e0f6;border-bottom:none;background:#e3f2fd"></div>
<svg class="a" style="left:1012px;top:760px" width="10" height="8" viewBox="0 0 10 8"><path d="M9 1L2 8h7z" fill="#9ccdf3"/></svg>
<div class="t" style="left:4.10px;top:766px;font-size:11px;color:#222;transform:scaleX(0.893);">Hier können Sie Ordner direkt vergleichen</div>
<div class="a" style="left:1022.200px;top:0;width:1.800px;height:768px;background:linear-gradient(#3c3c3c 0,#3c3c3c 31px,#0a1216 32px,#0a1216 43px,#343434 44px,#2e2e2e 708px,#3e4652 710px,#3e4652 768px)"></div><div class="a" style="left:1022.600px;top:725.500px;width:1.400px;height:7px;background:#aeb2ba"></div>
</body></html>
